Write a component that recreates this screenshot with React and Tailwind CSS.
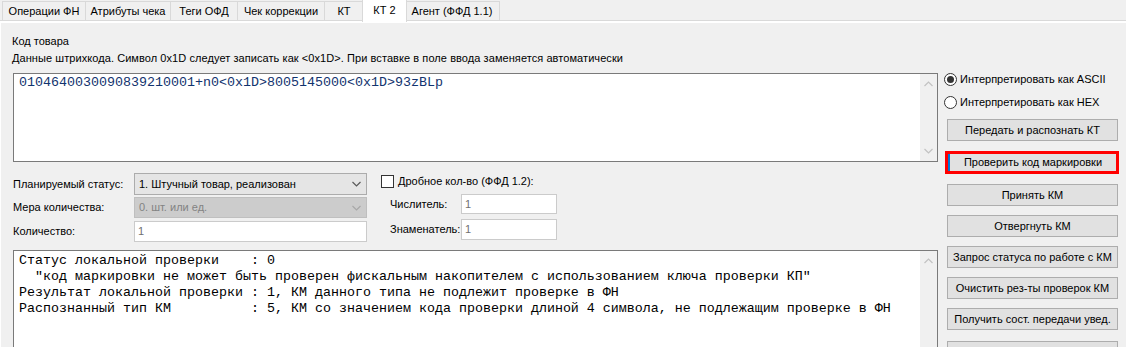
import React from "react";

const tabs = [
  { label: "Операции ФН", w: "w-[84px]" },
  { label: "Атрибуты чека", w: "w-[86px]" },
  { label: "Теги ОФД", w: "w-[68px]" },
  { label: "Чек коррекции", w: "w-[88px]" },
  { label: "КТ", w: "w-[40px]" },
  { label: "КТ 2", w: "w-[45px]", active: true },
  { label: "Агент (ФФД 1.1)", w: "w-[96px]" },
];

const resultText = [
  "Статус локальной проверки    : 0",
  '  "код маркировки не может быть проверен фискальным накопителем с использованием ключа проверки КП"',
  "Результат локальной проверки : 1, КМ данного типа не подлежит проверке в ФН",
  "Распознанный тип КМ          : 5, КМ со значением кода проверки длиной 4 символа, не подлежащим проверке в ФН",
];

const Chevron = ({ up, color = "#c2c2c2" }) => (
  <svg width="9" height="6" viewBox="0 0 9 6">
    <path
      d={up ? "M0.5 5 L4.5 1 L8.5 5" : "M0.5 1 L4.5 5 L8.5 1"}
      fill="none"
      stroke={color}
      strokeWidth="1.2"
    />
  </svg>
);

// vertical scrollbar stub inside the memo fields
const ScrollBar = ({ down = true }) => (
  <div className="w-[17px] self-stretch bg-[#f0f0f0] flex flex-col items-center justify-between py-[7px]">
    <Chevron up />
    {down && <Chevron />}
  </div>
);

const Button = ({ children, className = "" }) => (
  <div
    className={`h-[22px] w-[171px] ml-[3px] border border-[#adadad] bg-[#e1e1e1] flex items-center justify-center text-[11px] text-black ${className}`}
  >
    {children}
  </div>
);

const Combo = ({ value, disabled, h = "h-[22px]" }) => (
  <div
    className={`${h} w-[233px] flex items-center justify-between pl-[4px] pr-[5px] border ${
      disabled
        ? "bg-[#cccccc] border-[#bfbfbf] text-[#838383]"
        : "bg-[#e5e5e5] border-[#acacac] text-black"
    }`}
  >
    <span>{value}</span>
    <Chevron color={disabled ? "#a8a8a8" : "#5a5a5a"} />
  </div>
);

const Field = ({ value, w, h = "h-[20px]" }) => (
  <div className={`${h} ${w} bg-white border border-[#cbcbcb] flex items-center pl-[3px] text-[#707070]`}>
    {value}
  </div>
);

const Radio = ({ checked, label }) => (
  <div className="flex items-center h-[14px] gap-[3px]">
    <div className="w-[13px] h-[13px] rounded-full border border-[#333] bg-white flex items-center justify-center">
      {checked && <div className="w-[7px] h-[7px] rounded-full bg-[#333]" />}
    </div>
    <span>{label}</span>
  </div>
);

export default function App() {
  return (
    <div className="w-[1126px] h-[347px] overflow-hidden bg-[#f0f0f0] [font-family:'Liberation_Sans',Arial,sans-serif] text-[11px] text-black">
      {/* Tabs */}
      <div className="h-[21px] flex items-end border-b border-[#d9d9d9] pl-[2px]">
        {tabs.map((t) =>
          t.active ? (
            <div
              key={t.label}
              className={`${t.w} h-[23px] -mb-[2px] -ml-[2px] -mr-[2px] relative z-10 bg-white border border-b-0 border-[#d9d9d9] flex items-start justify-center pt-[2px]`}
            >
              {t.label}
            </div>
          ) : (
            <div
              key={t.label}
              className={`${t.w} h-[19px] bg-[#f0f0f0] border border-b-0 border-[#d9d9d9] -ml-px first:ml-0 flex items-center justify-center`}
            >
              {t.label}
            </div>
          )
        )}
      </div>

      {/* Panel */}
      <div className="border-t-2 border-l border-white flex">
        {/* Left column */}
        <div className="ml-[11px] w-[926px] flex flex-col">
          <div className="h-[13px] mt-[12px] leading-[13px]">Код товара</div>
          <div className="h-[13px] mt-[4px] leading-[13px] tracking-[0.07px]">
            Данные штрихкода. Символ 0x1D следует записать как &lt;0x1D&gt;. При вставке в поле ввода заменяется автоматически
          </div>

          <div className="mt-[8px] ml-px h-[89px] bg-white border border-[#7a7a7a] flex">
            <pre className="flex-1 pl-[5px] pt-[1px] [font-family:'Liberation_Mono','Courier_New',monospace] text-[13.33px] leading-[16px] text-[#12336e]">
              0104640030090839210001+n0&lt;0x1D&gt;8005145000&lt;0x1D&gt;93zBLp
            </pre>
            <ScrollBar />
          </div>

          {/* Form */}
          <div className="mt-[11px] flex h-[69px]">
            <div className="flex flex-col w-[355px]">
              <div className="flex items-center h-[22px]">
                <span className="w-[122px] pl-px">Планируемый статус:</span>
                <Combo value="1. Штучный товар, реализован" />
              </div>
              <div className="flex items-center h-[21px] mt-[2px]">
                <span className="w-[122px] pl-px">Мера количества:</span>
                <Combo value="0. шт. или ед." disabled h="h-[21px]" />
              </div>
              <div className="flex items-center h-[21px] mt-[3px]">
                <span className="w-[122px] pl-px">Количество:</span>
                <Field value="1" w="w-[233px]" h="h-[21px]" />
              </div>
            </div>

            <div className="flex flex-col ml-[14px]">
              <div className="flex items-center h-[13px] mt-[2px] gap-[4px]">
                <div className="w-[13px] h-[13px] bg-white border border-[#333]" />
                <span>Дробное кол-во (ФФД 1.2):</span>
              </div>
              <div className="flex items-center h-[20px] mt-[6px] ml-[9px]">
                <span className="w-[71px]">Числитель:</span>
                <Field value="1" w="w-[96px]" />
              </div>
              <div className="flex items-center h-[21px] mt-[5px] ml-[9px]">
                <span className="w-[71px]">Знаменатель:</span>
                <Field value="1" w="w-[96px]" h="h-[21px]" />
              </div>
            </div>
          </div>

          <div className="mt-[8px] ml-px h-[110px] bg-white border border-[#7a7a7a] flex">
            <pre className="flex-1 pl-[5px] pt-[2px] [font-family:'Liberation_Mono','Courier_New',monospace] text-[13.33px] leading-[16px] text-black">
              {resultText.join("\n")}
            </pre>
            <ScrollBar down={false} />
          </div>
        </div>

        {/* Right column */}
        <div className="ml-[6px] w-[176px] flex flex-col">
          <div className="mt-[49px]">
            <Radio checked label="Интерпретировать как ASCII" />
          </div>
          <div className="mt-[9px]">
            <Radio label="Интерпретировать как HEX" />
          </div>
          <Button className="mt-[10px]">Передать и распознать КТ</Button>
          <div className="mt-[10px] ml-px w-[174px] h-[23px] border-[3px] border-[#ff0000]">
            <div className="h-full w-full bg-[#e1e1e1] border-l-2 border-[#0078d7] flex items-center justify-center">
              Проверить код маркировки
            </div>
          </div>
          <Button className="mt-[10px]">Принять КМ</Button>
          <Button className="mt-[9px]">Отвергнуть КМ</Button>
          <Button className="mt-[9px]">Запрос статуса по работе с КМ</Button>
          <Button className="mt-[9px]">Очистить рез-ты проверок КМ</Button>
          <Button className="mt-[9px]">Получить сост. передачи увед.</Button>
          <Button className="mt-[11px]" />
        </div>
      </div>
    </div>
  );
}
